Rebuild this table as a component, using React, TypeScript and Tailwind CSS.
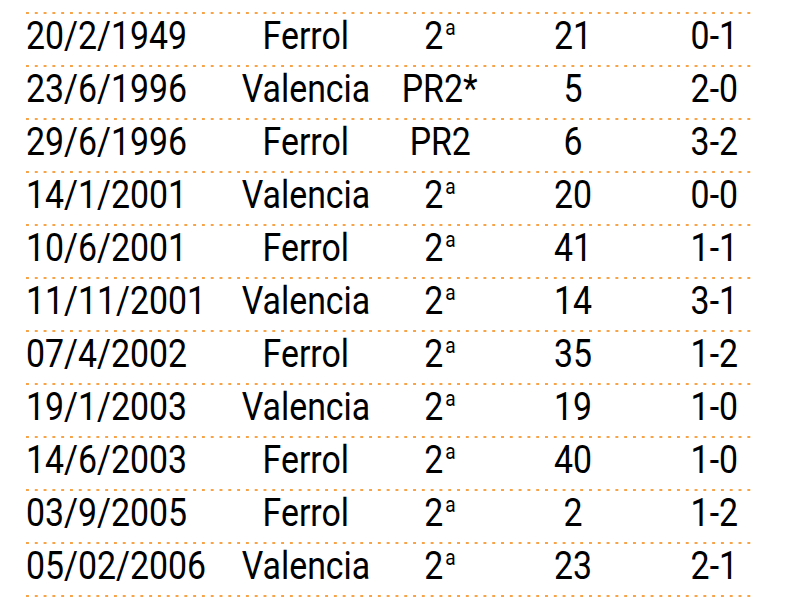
const rows = [
  ["20/2/1949", "Ferrol", "2a", "21", "0-1"],
  ["23/6/1996", "Valencia", "PR2*", "5", "2-0"],
  ["29/6/1996", "Ferrol", "PR2", "6", "3-2"],
  ["14/1/2001", "Valencia", "2a", "20", "0-0"],
  ["10/6/2001", "Ferrol", "2a", "41", "1-1"],
  ["11/11/2001", "Valencia", "2a", "14", "3-1"],
  ["07/4/2002", "Ferrol", "2a", "35", "1-2"],
  ["19/1/2003", "Valencia", "2a", "19", "1-0"],
  ["14/6/2003", "Ferrol", "2a", "40", "1-0"],
  ["03/9/2005", "Ferrol", "2a", "2", "1-2"],
  ["05/02/2006", "Valencia", "2a", "23", "2-1"],
]

const dotted =
  "h-[2px] bg-[linear-gradient(to_right,#f7a449_3px,transparent_3px)] bg-[length:8.8px_2px] bg-repeat-x"

function Division({ value }: { value: string }) {
  if (value === "2a") {
    return (
      <>
        2<span className="text-[22px] leading-none align-[14px] ml-[2px]">a</span>
      </>
    )
  }
  return <>{value}</>
}

export default function App() {
  return (
    <div className="w-[800px] h-[600px] bg-white overflow-hidden font-['Roboto',sans-serif] text-black">
      <div className="ml-[26px] mt-[12px] w-[727px]">
        <div className={dotted} />
        {rows.map((r) => (
          <div key={r[0]}>
            <div className="grid grid-cols-[200px_160px_108px_158px_101px] text-[39px] leading-[45px] pb-[6px] whitespace-nowrap">
              <div>
                <span className="inline-block origin-left scale-x-[0.868]">{r[0]}</span>
              </div>
              <div className="text-center">
                <span className="inline-block scale-x-[0.868]">{r[1]}</span>
              </div>
              <div className="text-center">
                <span className="inline-block scale-x-[0.868]">
                  <Division value={r[2]} />
                </span>
              </div>
              <div className="text-center">
                <span className="inline-block scale-x-[0.868]">{r[3]}</span>
              </div>
              <div className="text-center pl-[24px]">
                <span className="inline-block scale-x-[0.868]">{r[4]}</span>
              </div>
            </div>
            <div className={dotted} />
          </div>
        ))}
      </div>
    </div>
  )
}
